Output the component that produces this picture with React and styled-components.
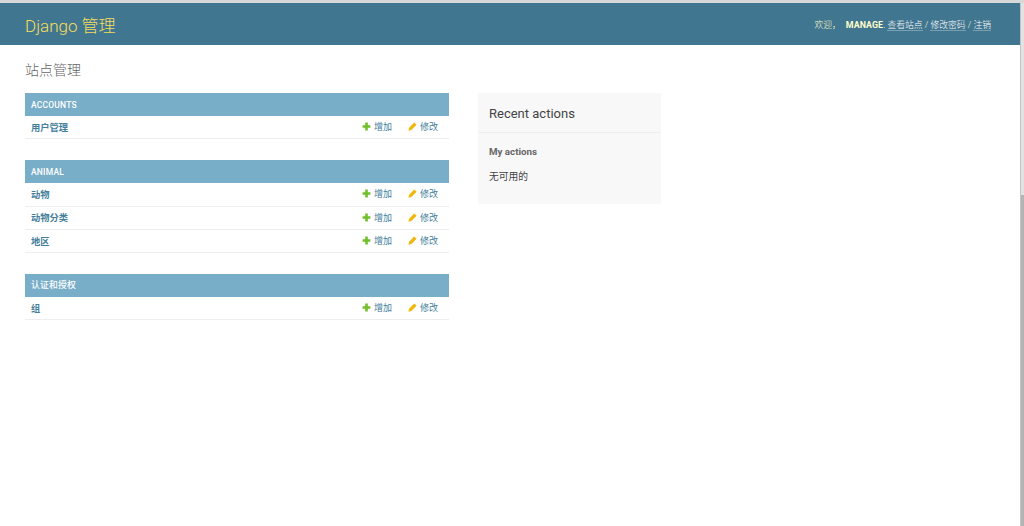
import React from "react";
import styled, { createGlobalStyle } from "styled-components";

const Global = createGlobalStyle`
  html, body { margin: 0; padding: 0; height: 100%; overflow: hidden; background: #fff; }
  body { font-family: Roboto, "Noto Sans CJK SC", "Lucida Grande", Verdana, Arial, sans-serif; font-size: 14px; color: #333; }
  * { box-sizing: border-box; }
`;
const cjk = `Roboto, "Noto Sans CJK SC", sans-serif`;

const Page = styled.div`
  width: 1024px; height: 526px; position: relative; overflow: hidden;
  border-top: 3px solid #d8d8d8;
`;
const Header = styled.header`
  height: 42px; background: #417690; color: #ffc;
  display: flex; align-items: center; justify-content: space-between;
  padding: 0 33px 0 25px;
`;
const Brand = styled.h1`
  margin: 0; font-size: 17px; font-weight: 300; color: #f5dd5d; font-family: ${cjk};
`;
const Tools = styled.div`
  font-size: 8.8px; font-weight: 300; color: #ffc; font-family: ${cjk};
`;
const Strong = styled.strong`
  font-weight: 700; letter-spacing: 0.1px; margin-left: 5px;
`;
const ToolLink = styled.a`
  color: #fff; border-bottom: 1px solid rgba(255,255,255,.3);
`;
const Main = styled.main`
  padding: 16px 25px 0;
`;
const Title = styled.h2`
  margin: 0 0 14px; font-size: 14px; line-height: 18px; font-weight: 300; color: #666; font-family: ${cjk};
`;
const Columns = styled.div`
  display: flex; align-items: flex-start; gap: 29px;
`;
const Left = styled.div`
  width: 424px; display: flex; flex-direction: column; gap: 21px;
`;
const Caption = styled.div`
  height: 23px; background: #79aec8; color: #fff; font-size: ${p => (p.$cjk ? 8.8 : 8.5)}px; font-weight: 500;
  letter-spacing: 0.2px; display: flex; align-items: center; padding: 0 6px ${p => (p.$cjk ? 2 : 0)}px;
  font-family: ${cjk};
`;
const Row = styled.div`
  height: 23.3px; display: flex; align-items: center; padding: 0 11px 1px 6px;
  border-bottom: 1px solid #eee; font-size: 9.25px;
`;
const ModelName = styled.span`
  flex: 1; color: #447e9b; font-weight: 600; font-family: ${cjk};
`;
const Action = styled.span`
  display: inline-flex; align-items: center; gap: 3px; color: #447e9b; font-weight: 400;
  font-size: 9px; font-family: ${cjk}; margin-left: ${p => p.$gap}px;
`;
const Recent = styled.aside`
  width: 183px; height: 111px; background: #f8f8f8;
`;
const RecentHead = styled.div`
  height: 40px; padding: 1px 11px 0; display: flex; align-items: center;
  border-bottom: 1px solid #eee; font-size: 13px; color: #444; font-weight: 400;
`;
const RecentBody = styled.div`
  padding: 0 11px;
`;
const MyActions = styled.h3`
  margin: 13px 0 0; font-size: 9.75px; line-height: 12px; font-weight: 700; color: #666;
`;
const None = styled.p`
  margin: 12px 0 0; font-size: 9.75px; line-height: 14px; color: #444; font-family: ${cjk};
`;
const Scrollbar = styled.div`
  position: absolute; right: 0; top: -3px; bottom: 0; width: 4px; background: #e2e2e2;
  border-left: 1px solid #c4c4c4;
`;
const Thumb = styled.div`
  position: absolute; left: 0; right: 0; top: 195px; bottom: 0; background: #b4b4b4;
`;

const Plus = () => (
  <svg width="9" height="9" viewBox="0 0 9 9"><path d="M3.2 .6h2.6v2.6h2.6v2.6H5.8v2.6H3.2V5.8H.6V3.2h2.6z" fill="#70bf2b" /></svg>
);
const Pencil = () => (
  <svg width="9" height="9" viewBox="0 0 9 9"><path d="M6.2 .4l2.4 2.4-5.2 5.2-3 .8.7-3.1z" fill="#efb80b" /></svg>
);

const apps = [
  { name: "ACCOUNTS", models: ["用户管理"] },
  { name: "ANIMAL", models: ["动物", "动物分类", "地区"] },
  { name: "认证和授权", models: ["组"], cjk: true },
];

export default function App() {
  return (
    <Page>
      <Global />
      <Header>
        <Brand>Django 管理</Brand>
        <Tools>
          欢迎，<Strong>MANAGE</Strong>. <ToolLink>查看站点</ToolLink> / <ToolLink>修改密码</ToolLink> / <ToolLink>注销</ToolLink>
        </Tools>
      </Header>
      <Main>
        <Title>站点管理</Title>
        <Columns>
          <Left>
            {apps.map(app => (
              <section key={app.name}>
                <Caption $cjk={app.cjk}>{app.name}</Caption>
                {app.models.map(m => (
                  <Row key={m}>
                    <ModelName>{m}</ModelName>
                    <Action $gap={0}><Plus />增加</Action>
                    <Action $gap={16}><Pencil />修改</Action>
                  </Row>
                ))}
              </section>
            ))}
          </Left>
          <Recent>
            <RecentHead>Recent actions</RecentHead>
            <RecentBody>
              <MyActions>My actions</MyActions>
              <None>无可用的</None>
            </RecentBody>
          </Recent>
        </Columns>
      </Main>
      <Scrollbar><Thumb /></Scrollbar>
    </Page>
  );
}
